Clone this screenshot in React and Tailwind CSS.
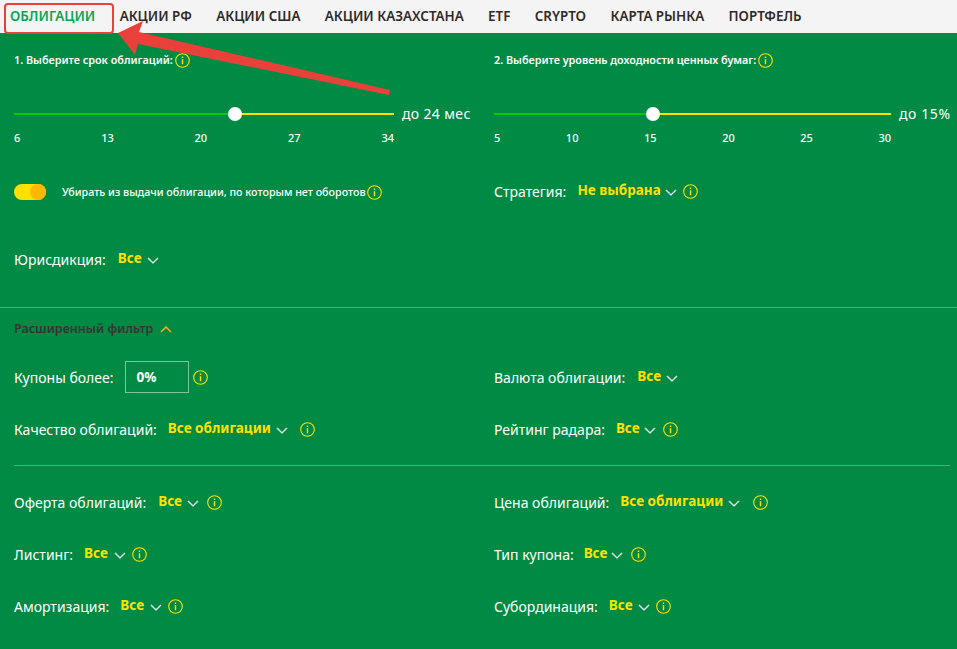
const font = { fontFamily: '"Noto Sans", sans-serif' };

function Info({ className = "" }) {
  return (
    <svg width="15" height="15" viewBox="0 0 15 15" fill="none" className={`shrink-0 ${className}`}>
      <circle cx="7.5" cy="7.5" r="6.8" stroke="#ffe000" strokeWidth="1.1" />
      <path d="M7.5 3.6v1.3M7.5 6.3v5" stroke="#ffe000" strokeWidth="1.4" />
    </svg>
  );
}

function Chevron({ up = false, color = "#ffffff", className = "" }) {
  return (
    <svg width="12" height="7" viewBox="0 0 12 7" fill="none" className={`shrink-0 ${className}`}>
      <path d={up ? "M1 6l5-5 5 5" : "M1 1l5 5 5-5"} stroke={color} strokeWidth={up ? 1.6 : 1.2} />
    </svg>
  );
}

function Slider({ left, ticks, trackW, label, tracking }) {
  return (
    <div>
      <div className="flex items-center h-[16px]">
        <div className="relative h-[2px] bg-[#ffe000]" style={{ width: trackW }}>
          <div className="absolute left-0 top-0 h-[2px] bg-[#00cc00]" style={{ width: left }} />
          <div
            className="absolute top-[-6px] w-[14px] h-[14px] rounded-full bg-white"
            style={{ left: left - 7 }}
          />
        </div>
        <span className={`ml-2 text-[14px] leading-none ${tracking} text-white whitespace-nowrap`}>{label}</span>
      </div>
      <div className="flex justify-between mt-[8px] text-[11px] leading-[16px] font-medium text-white" style={{ width: trackW }}>
        {ticks.map((t) => (
          <span key={t}>{t}</span>
        ))}
      </div>
    </div>
  );
}

function Field({ label, value, gap = "ml-[11px]", chevGap = "ml-[5px]", infoGap = "ml-[7px]" }) {
  return (
    <div className="flex items-center h-[20px] whitespace-nowrap">
      <span className="text-[14px] text-white">{label}</span>
      <span className={`${gap} text-[13.5px] font-bold text-[#ffe000] relative top-[-1px]`}>{value}</span>
      <Chevron className={`${chevGap} relative top-[1px]`} />
      {infoGap && <Info className={infoGap} />}
    </div>
  );
}

export default function App() {
  const nav = ["АКЦИИ РФ", "АКЦИИ США", "АКЦИИ КАЗАХСТАНА", "ETF", "CRYPTO", "КАРТА РЫНКА", "ПОРТФЕЛЬ"];
  return (
    <div className="relative w-[957px] h-[649px] overflow-hidden bg-[#008a44]" style={font}>
      <nav className="flex items-center gap-[24.4px] h-[33px] pl-[10px] bg-[#f4f4f4] text-[13.4px] font-semibold text-[#2e2a2a] whitespace-nowrap">
        <span className="text-[#0aa552]">ОБЛИГАЦИИ</span>
        {nav.map((n) => (
          <span key={n}>{n}</span>
        ))}
      </nav>

      <div className="grid grid-cols-[480px_1fr] pl-[14px] pr-[7px]">
        <div className="flex items-center gap-[2px] h-[16px] mt-[19px] text-[10.8px] font-semibold text-white whitespace-nowrap">
          1. Выберите срок облигаций:
          <Info />
        </div>
        <div className="flex items-center gap-[2px] h-[16px] mt-[19px] text-[10.8px] font-semibold text-white whitespace-nowrap">
          2. Выберите уровень доходности ценных бумаг:
          <Info />
        </div>

        <div className="mt-[38px]">
          <Slider left={221} trackW={380} ticks={[6, 13, 20, 27, 34]} label="до 24 мес" tracking="tracking-[0.35px]" />
        </div>
        <div className="mt-[38px]">
          <Slider left={159} trackW={397} ticks={[5, 10, 15, 20, 25, 30]} label="до 15%" tracking="tracking-[0.6px]" />
        </div>

        <div className="flex items-center h-[20px] mt-[36px] whitespace-nowrap">
          <div className="relative w-[32px] h-[16px] rounded-full bg-[#ffe000]">
            <div className="absolute right-0 top-0 w-[16px] h-[16px] rounded-full bg-[#ffb800]" />
          </div>
          <span className="ml-[16px] text-[10.72px] font-medium text-white">
            Убирать из выдачи облигации, по которым нет оборотов
          </span>
          <Info className="ml-[1px]" />
        </div>
        <div className="mt-[35px]">
          <Field label="Стратегия:" value="Не выбрана" chevGap="ml-[4px]" infoGap="ml-[6px]" />
        </div>

        <div className="mt-[47px] col-span-2">
          <Field label="Юрисдикция:" value="Все" gap="ml-[12px]" infoGap="" />
        </div>
      </div>

      <div className="h-px bg-white/30 mt-[38px]" />

      <div className="flex items-center h-[20px] mt-[11px] pl-[14px]">
        <span className="text-[12.5px] font-semibold text-[#3a3232]">Расширенный фильтр</span>
        <Chevron up color="#f5a623" className="ml-[7px]" />
      </div>

      <div className="grid grid-cols-[480px_1fr] pl-[14px] pr-[7px] mt-[22px]">
        <div className="flex items-center h-[32px] whitespace-nowrap">
          <span className="text-[14px] text-white">Купоны более:</span>
          <div className="flex items-center w-[64px] h-[32px] ml-[12px] pl-[10px] border border-white/50 text-[13.5px] font-bold text-white">
            0%
          </div>
          <Info className="ml-[4px]" />
        </div>
        <div className="flex items-center h-[32px]">
          <Field label="Валюта облигации:" value="Все" gap="ml-[12px]" infoGap="" />
        </div>

        <div className="mt-[26px]">
          <Field label="Качество облигаций:" value="Все облигации" infoGap="ml-[12px]" />
        </div>
        <div className="mt-[26px]">
          <Field label="Рейтинг радара:" value="Все" chevGap="ml-[4px]" infoGap="ml-[7px]" />
        </div>
      </div>

      <div className="h-px bg-white/30 mt-[26px] ml-[14px] mr-[7px]" />

      <div className="grid grid-cols-[480px_1fr] gap-y-[32px] pl-[14px] pr-[7px] mt-[26px]">
        <Field label="Оферта облигаций:" value="Все" gap="ml-[12px]" infoGap="ml-[8px]" />
        <Field label="Цена облигаций:" value="Все облигации" gap="ml-[11px]" infoGap="ml-[13px]" />
        <Field label="Листинг:" value="Все" gap="ml-[11px]" chevGap="ml-[6px]" infoGap="ml-[6px]" />
        <Field label="Тип купона:" value="Все" gap="ml-[10px]" chevGap="ml-[4px]" infoGap="ml-[8px]" />
        <Field label="Амортизация:" value="Все" gap="ml-[11px]" chevGap="ml-[6px]" infoGap="ml-[6px]" />
        <Field label="Субординация:" value="Все" gap="ml-[11px]" chevGap="ml-[5px]" infoGap="ml-[6px]" />
      </div>

      <div className="absolute left-[4px] top-[3px] w-[110px] h-[31px] rounded-[4px] border-[2px] border-[#e8413a]" />
      <svg className="absolute left-0 top-0 pointer-events-none" width="420" height="110" viewBox="0 0 420 110" fill="none">
        <polygon points="118,33 143,21 139,32 390,90 389,95 138,44 135,55" fill="#e8413a" />
      </svg>
    </div>
  );
}
